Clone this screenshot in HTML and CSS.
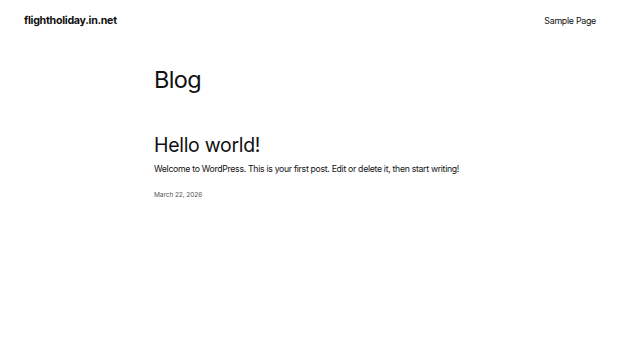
FILE: index.html
```html
<!DOCTYPE html>
<html lang="en">

<head>
  <meta charset="UTF-8" />
  <meta name="viewport" content="width=device-width, initial-scale=1" />
  <title>Blog - flightholiday.in.net</title>
  <link rel="stylesheet" href="styles.css">
</head>

<body>

  <!-- Header -->
  <header class="site-header">
    <a class="site-title" href="#">flightholiday.in.net</a>
    <nav class="site-nav">
      <a href="#">Sample Page</a>
    </nav>
  </header>

  <!-- Posts -->
  <main class="site-main">
    <h1 class="page-title">Blog</h1>

    <article class="post">
      <h2 class="post-title"><a href="#">Hello world!</a></h2>
      <p class="post-excerpt">Welcome to WordPress. This is your first post. Edit or delete it, then start writing!</p>
      <div class="post-date">March 22, 2026</div>
    </article>
  </main>

</body>

</html>
```

FILE: styles.css
```css
* {
  box-sizing: border-box;
}

body {
  margin: 0;
  background: #fff;
  color: #111;
  font-family: Inter, 'Noto Sans', sans-serif;
  -webkit-font-smoothing: antialiased;
}

a {
  color: inherit;
  text-decoration: none;
}

/* Header */
.site-header {
  display: flex;
  justify-content: space-between;
  align-items: baseline;
  padding: 11px 24px 0 24px;
  height: 34px;
  line-height: 14px;
}

.site-title {
  font-size: 10.7px;
  font-weight: 700;
  letter-spacing: -0.3px;
}

.site-nav a {
  font-size: 8.9px;
  letter-spacing: -0.3px;
}

/* Main */
.site-main {
  width: 312px;
  margin: 0 auto;
  padding-top: 31px;
}

.page-title {
  margin: 0;
  font-size: 23.5px;
  font-weight: 400;
  letter-spacing: -0.6px;
  line-height: 30px;
}

.post {
  margin-top: 37.5px;
}

.post-title {
  margin: 0;
  font-size: 19.5px;
  font-weight: 400;
  letter-spacing: -0.3px;
  line-height: 24px;
}

.post-excerpt {
  margin: 6px 0 0 0;
  font-size: 8.7px;
  letter-spacing: -0.3px;
  line-height: 12px;
}

.post-date {
  margin-top: 16px;
  font-size: 6.6px;
  line-height: 9px;
  color: #555;
  letter-spacing: -0.1px;
}
```
